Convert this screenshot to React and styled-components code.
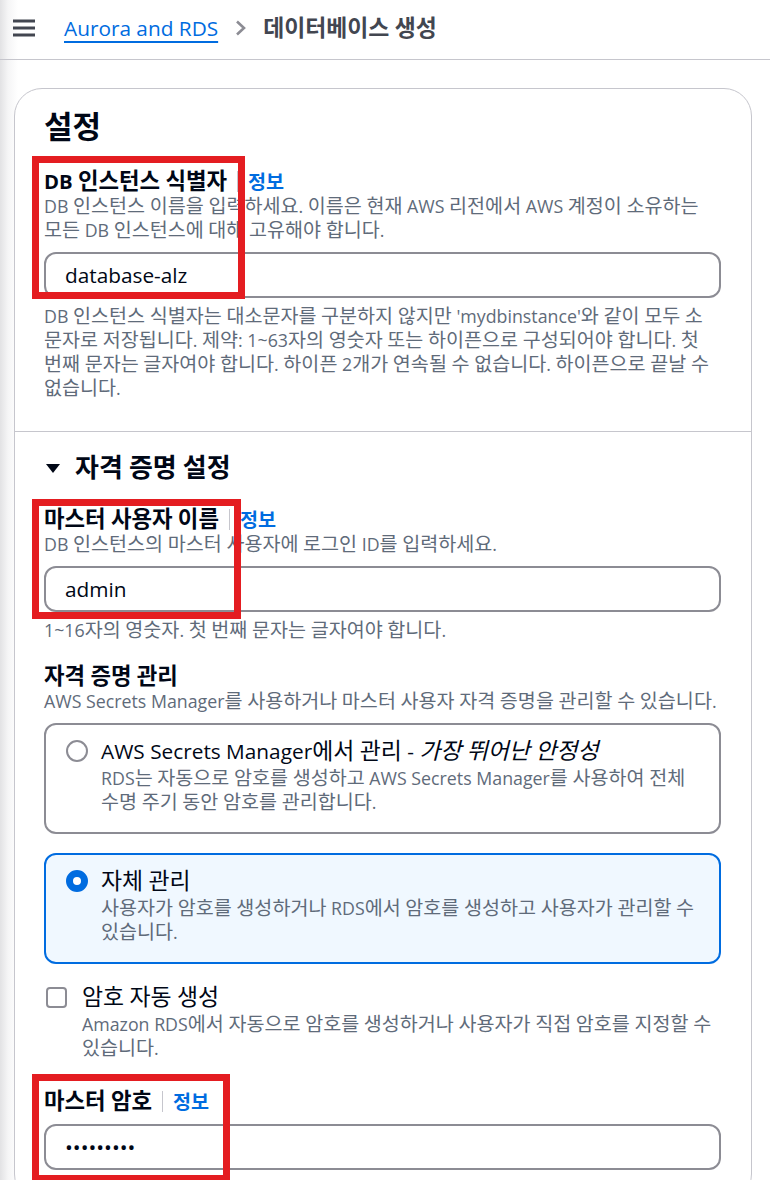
import React from "react";
import styled, { createGlobalStyle } from "styled-components";

const GlobalStyle = createGlobalStyle`
  html, body {
    margin: 0;
    padding: 0;
    overflow: hidden;
    background: #ffffff;
  }
  body {
    font-family: "Open Sans", "Noto Sans CJK KR", sans-serif;
    color: #000716;
  }
`;

// Korean glyphs sit larger next to the latin text in the console font
const Hangul = styled.span`
  font-size: 1.1em;
  line-height: 0;
`;

const HANGUL_RUN = /([\u1100-\u11ff\u3130-\u318f\uac00-\ud7af]+)/;

function K({ children }) {
  return String(children)
    .split(HANGUL_RUN)
    .map((part, i) => (i % 2 ? <Hangul key={i}>{part}</Hangul> : part));
}

const Page = styled.div`
  min-height: 1180px;
  background: linear-gradient(to right, #e2e2e4 0, #f5f5f6 8px, #ffffff 18px);
`;

const TopBar = styled.header`
  height: 56px;
  padding: 0 0 3px 13px;
  border-bottom: 1px solid #c6c6cd;
  display: flex;
  align-items: center;
  gap: 29px;
`;

const Crumbs = styled.nav`
  display: flex;
  align-items: center;
  gap: 17px;
  font-size: 20.8px;
  line-height: 30px;
`;

const CrumbLink = styled.a`
  color: #006ce0;
  text-decoration: underline;
  text-decoration-thickness: 2px;
  text-underline-offset: 5px;
`;

const CrumbCurrent = styled.span`
  color: #424650;
  font-weight: 700;
`;

const Main = styled.main`
  padding: 28px 18px 0 14px;
`;

const Card = styled.section`
  background: #ffffff;
  border: 1px solid #c6c6cd;
  border-radius: 28px;
`;

const Section = styled.div`
  padding: 20px 30px 31px 29px;
  & + & {
    border-top: 1px solid #c6c6cd;
  }
`;

const Heading = styled.h2`
  margin: 0;
  font-size: 28.2px;
  line-height: 36px;
  font-weight: 700;
`;

const ExpandHeading = styled.h3`
  margin: 0;
  display: flex;
  align-items: center;
  gap: 15px;
  padding-left: 2px;
  font-size: 23.6px;
  line-height: 32px;
  font-weight: 700;
`;

const Field = styled.div`
  position: relative;
  margin-top: ${({ $gap }) => $gap}px;
`;

const Highlight = styled.div`
  position: absolute;
  top: ${({ $top }) => $top}px;
  left: -12px;
  width: ${({ $w }) => $w}px;
  height: ${({ $h }) => $h}px;
  box-sizing: border-box;
  border: 7px solid #e41d21;
  pointer-events: none;
  z-index: 2;
`;

const LabelRow = styled.div`
  box-sizing: border-box;
  display: flex;
  align-items: center;
  height: 27px;
  padding-top: 2px;
`;

const Label = styled.label`
  font-size: 20.3px;
  font-weight: 700;
  line-height: 27px;
`;

const Divider = styled.span`
  width: 1px;
  height: 21px;
  background: #c6c6cd;
  margin: 0 10px;
`;

const Info = styled.a`
  color: #006ce0;
  font-size: 17.8px;
  font-weight: 700;
`;

const Text = styled.p`
  margin: ${({ $top }) => $top || 0}px 0 0;
  font-size: 17.8px;
  line-height: 24px;
  color: #5f6b7a;
`;

const Input = styled.input`
  display: block;
  box-sizing: border-box;
  width: 100%;
  height: 46px;
  margin-top: 10px;
  padding: 0 19px;
  border: 2px solid #8c8c94;
  border-radius: 12px;
  background: #ffffff;
  font-family: inherit;
  font-size: 20.8px;
  color: #000716;
  outline: none;
`;

const Tiles = styled.div`
  display: flex;
  flex-direction: column;
  gap: 19px;
  margin-top: 10px;
`;

const Tile = styled.div`
  display: flex;
  gap: 13px;
  padding: 11px 12px 18px 20px;
  border: 2px solid ${({ $on }) => ($on ? "#006ce0" : "#8c8c94")};
  border-radius: 12px;
  background: ${({ $on }) => ($on ? "#f0f8ff" : "#ffffff")};
`;

const Radio = styled.span`
  flex: none;
  box-sizing: border-box;
  width: 22px;
  height: 22px;
  margin-top: 4px;
  border-radius: 50%;
  background: #ffffff;
  border: ${({ $on }) => ($on ? "7px solid #006ce0" : "2px solid #8c8c94")};
`;

const OptionTitle = styled.div`
  font-size: 20.8px;
  line-height: 30px;
  em {
    font-style: italic;
  }
`;

const CheckRow = styled.div`
  display: flex;
  gap: 15px;
  margin-top: 18px;
  padding-left: 2px;
`;

const Checkbox = styled.span`
  flex: none;
  box-sizing: border-box;
  width: 21px;
  height: 21px;
  margin-top: 5px;
  border: 2px solid #8c8c94;
  border-radius: 4px;
  background: #ffffff;
`;

function MenuIcon() {
  return (
    <svg width="22" height="18" viewBox="0 0 22 18">
      <path d="M0 2h22M0 9h22M0 16h22" stroke="#424650" strokeWidth="3" />
    </svg>
  );
}

function ChevronIcon() {
  return (
    <svg width="11" height="16" viewBox="0 0 11 16">
      <path d="M2 1.5l7 6.5-7 6.5" fill="none" stroke="#8c8c94" strokeWidth="2.6" />
    </svg>
  );
}

function CaretDown() {
  return (
    <svg width="14" height="9" viewBox="0 0 14 9">
      <path d="M0 0h14L7 9z" fill="#000716" />
    </svg>
  );
}

function FieldLabel({ children }) {
  return (
    <LabelRow>
      <Label>
        <K>{children}</K>
      </Label>
      <Divider />
      <Info>
        <K>정보</K>
      </Info>
    </LabelRow>
  );
}

export default function App() {
  return (
    <>
      <GlobalStyle />
      <Page>
        <TopBar>
          <MenuIcon />
          <Crumbs>
            <CrumbLink>Aurora and RDS</CrumbLink>
            <ChevronIcon />
            <CrumbCurrent>
              <K>데이터베이스 생성</K>
            </CrumbCurrent>
          </Crumbs>
        </TopBar>
        <Main>
          <Card>
            <Section>
              <Heading>
                <K>설정</K>
              </Heading>
              <Field $gap={22}>
                <Highlight $top={-11} $w={213} $h={143} />
                <FieldLabel>DB 인스턴스 식별자</FieldLabel>
                <Text>
                  <K>
                    DB 인스턴스 이름을 입력하세요. 이름은 현재 AWS 리전에서 AWS 계정이 소유하는 모든 DB
                    인스턴스에 대해 고유해야 합니다.
                  </K>
                </Text>
                <Input readOnly value="database-alz" />
                <Text $top={6}>
                  <K>DB 인스턴스 식별자는 대소문자를 구분하지 않지만 'mydbinstance'와 같이 모두 소</K>
                  <br />
                  <K>문자로 저장됩니다. 제약: 1~63자의 영숫자 또는 하이픈으로 구성되어야 합니다. 첫</K>
                  <br />
                  <K>번째 문자는 글자여야 합니다. 하이픈 2개가 연속될 수 없습니다. 하이픈으로 끝날 수</K>
                  <br />
                  <K>없습니다.</K>
                </Text>
              </Field>
            </Section>
            <Section>
              <ExpandHeading>
                <CaretDown />
                <span>
                  <K>자격 증명 설정</K>
                </span>
              </ExpandHeading>
              <Field $gap={21}>
                <Highlight $top={-6} $w={209} $h={120} />
                <FieldLabel>마스터 사용자 이름</FieldLabel>
                <Text>
                  <K>DB 인스턴스의 마스터 사용자에 로그인 ID를 입력하세요.</K>
                </Text>
                <Input readOnly value="admin" />
                <Text $top={6}>
                  <K>1~16자의 영숫자. 첫 번째 문자는 글자여야 합니다.</K>
                </Text>
              </Field>
              <Field $gap={20}>
                <LabelRow>
                  <Label>
                    <K>자격 증명 관리</K>
                  </Label>
                </LabelRow>
                <Text>
                  <K>AWS Secrets Manager를 사용하거나 마스터 사용자 자격 증명을 관리할 수 있습니다.</K>
                </Text>
                <Tiles>
                  <Tile>
                    <Radio />
                    <div>
                      <OptionTitle>
                        <K>AWS Secrets Manager에서 관리 - </K>
                        <em>
                          <K>가장 뛰어난 안정성</K>
                        </em>
                      </OptionTitle>
                      <Text>
                        <K>
                          RDS는 자동으로 암호를 생성하고 AWS Secrets Manager를 사용하여 전체 수명 주기
                          동안 암호를 관리합니다.
                        </K>
                      </Text>
                    </div>
                  </Tile>
                  <Tile $on>
                    <Radio $on />
                    <div>
                      <OptionTitle>
                        <K>자체 관리</K>
                      </OptionTitle>
                      <Text>
                        <K>
                          사용자가 암호를 생성하거나 RDS에서 암호를 생성하고 사용자가 관리할 수
                          있습니다.
                        </K>
                      </Text>
                    </div>
                  </Tile>
                </Tiles>
              </Field>
              <CheckRow>
                <Checkbox />
                <div>
                  <OptionTitle>
                    <K>암호 자동 생성</K>
                  </OptionTitle>
                  <Text>
                    <K>
                      Amazon RDS에서 자동으로 암호를 생성하거나 사용자가 직접 암호를 지정할 수
                      있습니다.
                    </K>
                  </Text>
                </div>
              </CheckRow>
              <Field $gap={27}>
                <Highlight $top={-13} $w={198} $h={108} />
                <FieldLabel>마스터 암호</FieldLabel>
                <Input readOnly type="password" value="123456789" />
              </Field>
            </Section>
          </Card>
        </Main>
      </Page>
    </>
  );
}
